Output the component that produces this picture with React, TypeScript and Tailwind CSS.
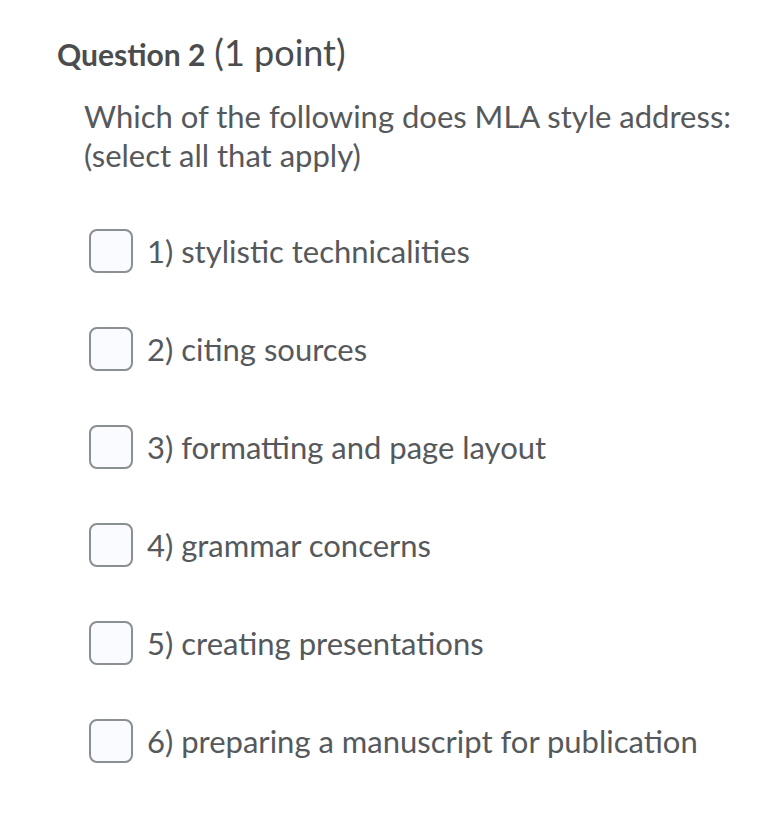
const options = [
  "1) stylistic technicalities",
  "2) citing sources",
  "3) formatting and page layout",
  "4) grammar concerns",
  "5) creating presentations",
  "6) preparing a manuscript for publication",
];

export default function App() {
  return (
    <div className="w-[776px] h-[828px] bg-white text-[#56595c] font-['Lato',sans-serif]">
      <div className="pt-[31px] pl-[57px]">
        <h2 className="leading-[42px] flex items-baseline gap-[9px]">
          <span className="font-bold text-[30px] text-[#4a4c4e]">Question 2</span>
          <span className="text-[36px] text-[#4a4c4e]">(1 point)</span>
        </h2>
      </div>
      <div className="pl-[84px] pt-[22px] pr-4">
        <p className="text-[31px] leading-[39px]">
          Which of the following does MLA style address:
          <br />
          (select all that apply)
        </p>
        <div className="mt-[54px] flex flex-col gap-[54px] pl-[5px]">
          {options.map((opt) => (
            <label key={opt} className="flex items-center gap-[14px]">
              <span className="w-[44px] h-[44px] rounded-[8px] border-2 border-[#8a8f92] bg-[#f9fbff] shrink-0" />
              <span className="text-[31px] leading-[44px]">{opt}</span>
            </label>
          ))}
        </div>
      </div>
    </div>
  );
}
